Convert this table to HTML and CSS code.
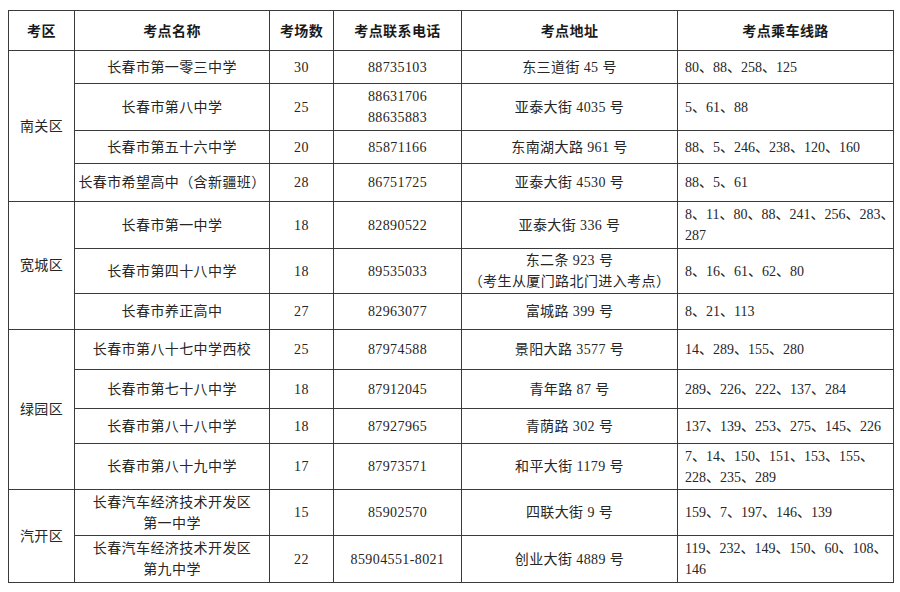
FILE: index.html
```html
<!DOCTYPE html>
<html lang="zh-CN">
<head>
<meta charset="utf-8">
<title>考点信息</title>
<link rel="stylesheet" href="styles.css">
</head>
<body>
<div class="sheet">
<table class="exam">
  <colgroup>
    <col class="c-area"><col class="c-name"><col class="c-rooms"><col class="c-phone"><col class="c-addr"><col class="c-route">
  </colgroup>
  <thead>
    <tr class="h40"><th>考区</th><th>考点名称</th><th>考场数</th><th>考点联系电话</th><th>考点地址</th><th>考点乘车线路</th></tr>
  </thead>
  <tbody>
    <tr class="h33"><td rowspan="4">南关区</td><td>长春市第一零三中学</td><td>30</td><td>88735103</td><td>东三道街 45 号</td><td class="route">80、88、258、125</td></tr>
    <tr class="h47"><td>长春市第八中学</td><td>25</td><td>88631706<br>88635883</td><td>亚泰大街 4035 号</td><td class="route">5、61、88</td></tr>
    <tr class="h33"><td>长春市第五十六中学</td><td>20</td><td>85871166</td><td>东南湖大路 961 号</td><td class="route">88、5、246、238、120、160</td></tr>
    <tr class="h38"><td>长春市希望高中（含新疆班）</td><td>28</td><td>86751725</td><td>亚泰大街 4530 号</td><td class="route">88、5、61</td></tr>

    <tr class="h47"><td rowspan="3">宽城区</td><td>长春市第一中学</td><td>18</td><td>82890522</td><td>亚泰大街 336 号</td><td class="route">8、11、80、88、241、256、283、<br>287</td></tr>
    <tr class="h45"><td>长春市第四十八中学</td><td>18</td><td>89535033</td><td>东二条 923 号<br>（考生从厦门路北门进入考点）</td><td class="route">8、16、61、62、80</td></tr>
    <tr class="h36"><td>长春市养正高中</td><td>27</td><td>82963077</td><td>富城路 399 号</td><td class="route">8、21、113</td></tr>

    <tr class="h40"><td rowspan="4">绿园区</td><td>长春市第八十七中学西校</td><td>25</td><td>87974588</td><td>景阳大路 3577 号</td><td class="route">14、289、155、280</td></tr>
    <tr class="h39"><td>长春市第七十八中学</td><td>18</td><td>87912045</td><td>青年路 87 号</td><td class="route">289、226、222、137、284</td></tr>
    <tr class="h35"><td>长春市第八十八中学</td><td>18</td><td>87927965</td><td>青荫路 302 号</td><td class="route">137、139、253、275、145、226</td></tr>
    <tr class="h46"><td>长春市第八十九中学</td><td>17</td><td>87973571</td><td>和平大街 1179 号</td><td class="route">7、14、150、151、153、155、<br>228、235、289</td></tr>

    <tr class="h46"><td rowspan="2">汽开区</td><td>长春汽车经济技术开发区<br>第一中学</td><td>15</td><td>85902570</td><td>四联大街 9 号</td><td class="route">159、7、197、146、139</td></tr>
    <tr class="h47"><td>长春汽车经济技术开发区<br>第九中学</td><td>22</td><td>85904551-8021</td><td>创业大街 4889 号</td><td class="route">119、232、149、150、60、108、<br>146</td></tr>
  </tbody>
</table>
</div>
</body>
</html>
```

FILE: styles.css
```css
html, body {
  margin: 0;
  padding: 0;
  background: #ffffff;
}

.sheet {
  padding: 10px 0 0 8px;
}

.exam {
  border-collapse: collapse;
  table-layout: fixed;
  width: 886px;
  font-family: "Liberation Serif", "Noto Sans CJK SC", sans-serif;
  font-size: 14px;
  line-height: 21px;
  letter-spacing: 0.4px;
  color: #262626;
}

.c-area { width: 66px; }
.c-name { width: 195px; }
.c-rooms { width: 64px; }
.c-phone { width: 128px; }
.c-addr { width: 216px; }
.c-route { width: 216px; }

.exam th,
.exam td {
  border: 1px solid #3a3a3a;
  padding: 0 2px;
  text-align: center;
  vertical-align: middle;
  white-space: nowrap;
  font-weight: 400;
}

.exam th {
  font-family: "Noto Sans CJK SC", sans-serif;
  font-weight: 700;
  color: #1a1a1a;
}

.exam td.route {
  text-align: left;
  padding-left: 7px;
  letter-spacing: 0;
}

.h33 { height: 33px; }
.h35 { height: 35px; }
.h36 { height: 36px; }
.h38 { height: 38px; }
.h39 { height: 39px; }
.h40 { height: 40px; }
.h45 { height: 45px; }
.h46 { height: 46px; }
.h47 { height: 47px; }
```
